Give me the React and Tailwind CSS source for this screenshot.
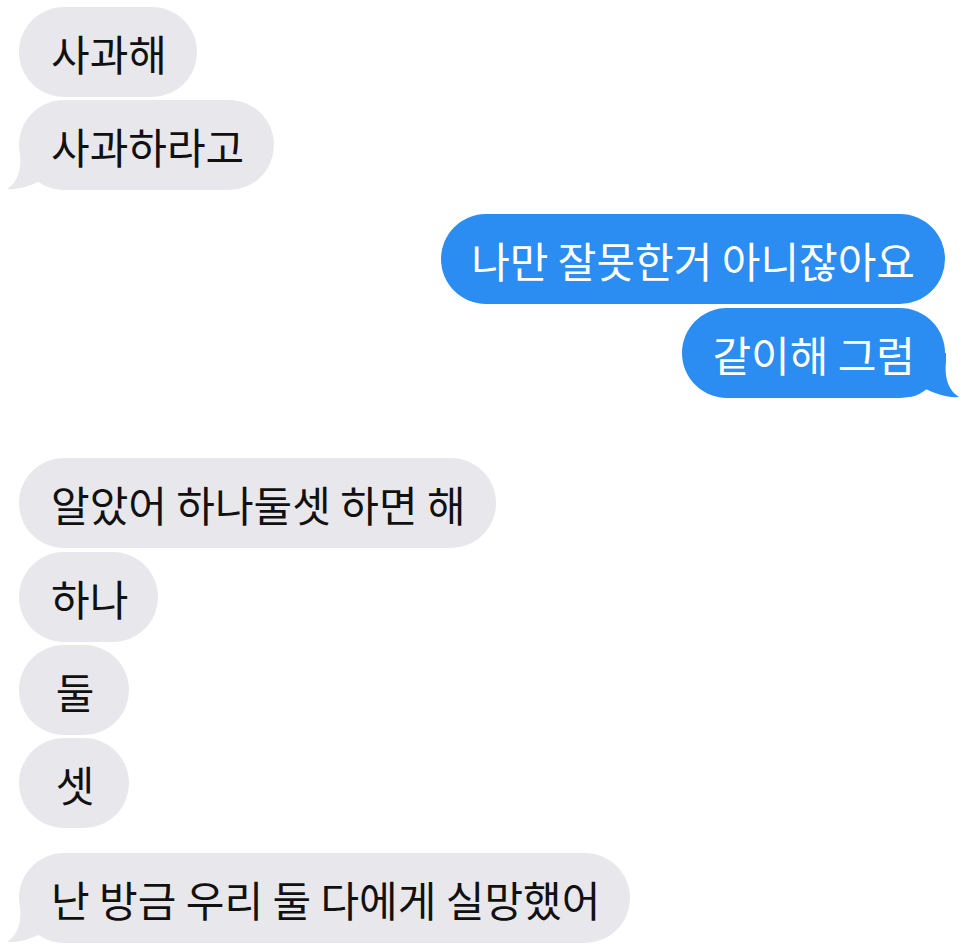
import React from "react";

const messages = [
  { text: "사과해", me: false, tail: false, mt: "mt-[7px]" },
  { text: "사과하라고", me: false, tail: true, mt: "mt-[3px]" },
  { text: "나만 잘못한거 아니잖아요", me: true, tail: false, mt: "mt-[24px]" },
  { text: "같이해 그럼", me: true, tail: true, mt: "mt-[4px]" },
  { text: "알았어 하나둘셋 하면 해", me: false, tail: false, mt: "mt-[60px]" },
  { text: "하나", me: false, tail: false, mt: "mt-[4px]" },
  { text: "둘", me: false, tail: false, mt: "mt-[3px]" },
  { text: "셋", me: false, tail: false, mt: "mt-[3px]" },
  { text: "난 방금 우리 둘 다에게 실망했어", me: false, tail: true, mt: "mt-[25px]" },
];

// Curled tail drawn at the bottom corner of the last bubble in a run.
function Tail({ me }) {
  return (
    <svg
      viewBox="0 0 60 45"
      width="60"
      height="45"
      className={
        me
          ? "absolute right-[-15px] bottom-0 -scale-x-100"
          : "absolute left-[-13px] bottom-0"
      }
    >
      <path
        d="M14 0 L14 8 C16 28 10 38 1 44 C12 45 24 41 34 36 C38 40 44 43 50 44 L50 0 Z"
        className={me ? "fill-[#2b8cf1]" : "fill-[#e8e8ec]"}
      />
    </svg>
  );
}

function Bubble({ text, me, tail }) {
  return (
    <div
      className={
        me
          ? "relative h-[90px] px-[30px] flex items-center justify-center rounded-[45px] bg-[#2b8cf1] text-white text-[42px] leading-none whitespace-nowrap"
          : "relative h-[90px] min-w-[110px] pl-[32px] pr-[30px] flex items-center justify-center rounded-[45px] bg-[#e8e8ec] text-[#111111] text-[42px] leading-none whitespace-nowrap"
      }
    >
      {tail && <Tail me={me} />}
      <span className="relative pt-[2px]">{text}</span>
    </div>
  );
}

export default function App() {
  return (
    <div className="w-[966px] h-[950px] overflow-hidden bg-white pl-[19px] pr-[21px] font-['Noto_Sans_CJK_KR','Noto_Sans',sans-serif] font-normal">
      {messages.map((m, i) => (
        <div
          key={i}
          className={`flex ${m.me ? "justify-end" : "justify-start"} ${m.mt}`}
        >
          <Bubble text={m.text} me={m.me} tail={m.tail} />
        </div>
      ))}
    </div>
  );
}
